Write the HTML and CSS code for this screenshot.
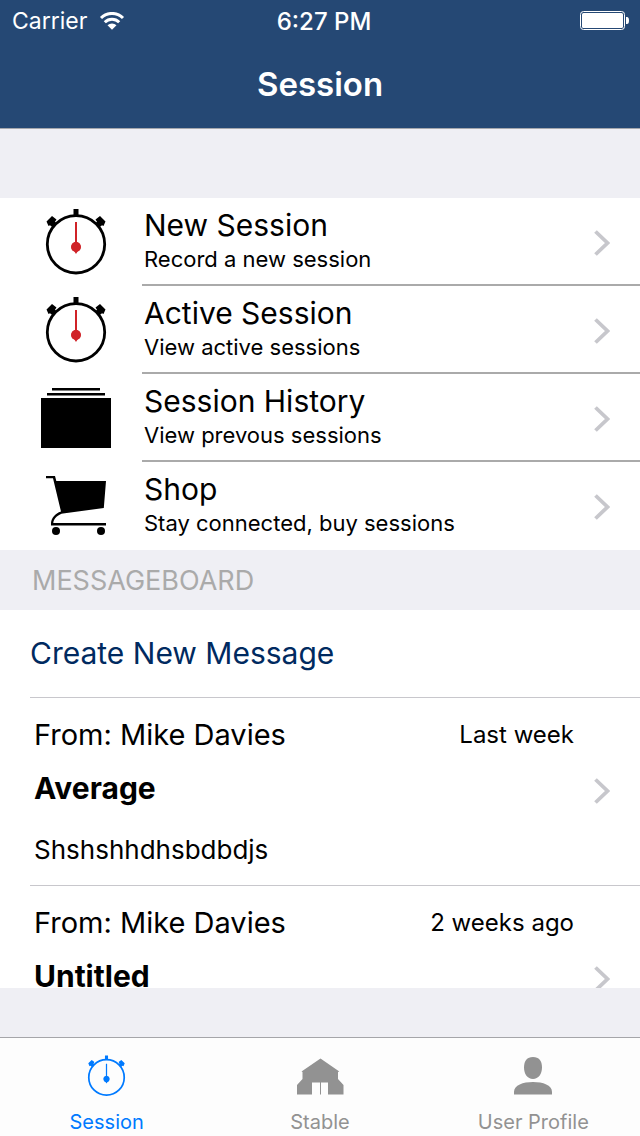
FILE: index.html
```html
<!DOCTYPE html>
<html lang="en">
<head>
<meta charset="utf-8">
<meta name="viewport" content="width=device-width, initial-scale=1">
<title>Session</title>
<link rel="stylesheet" href="styles.css">
</head>
<body>
<svg class="defs" aria-hidden="true">
  <symbol id="stopwatch" viewBox="0 0 72 68">
    <circle cx="36" cy="36.300" r="28.700" fill="none" stroke="currentColor" stroke-width="2.800"/>
    <path fill="currentColor" d="M33.500 1h5v7h-5zM6.500 13.500l5.500-5.500 4.500 3.500-1.500 2.300 1.500 1.500-4 4-2.500-2-1.500.8zM65.500 13.500l-5.500-5.500-4.500 3.500 1.500 2.300-1.500 1.500 4 4 2.500-2 1.500.8z"/>
    <path class="hand" d="M35 14h2v20a5 5 0 0 1 .8 9.200L36 46l-1.800-2.800A5 5 0 0 1 35 34z"/>
    <circle class="hand" cx="36" cy="39" r="5"/>
  </symbol>
  <symbol id="chevron" viewBox="0 0 16 26">
    <path d="M1.500 1.500 13.500 13 1.500 24.500" fill="none" stroke="currentColor" stroke-width="3.800"/>
  </symbol>
</svg>
<div class="app">
  <header class="top">
    <div class="status">
      <div class="carrier">
        <span>Carrier</span>
        <svg width="26" height="18" viewBox="0 0 26 18" aria-hidden="true">
          <path d="M2 6a15.500 15.500 0 0 1 22 0M5.800 10.200a10.200 10.200 0 0 1 14.400 0" fill="none" stroke="#fff" stroke-width="3"/>
          <path d="M8.500 13.200a6.500 6.500 0 0 1 9 0L13 17.700z" fill="#fff"/>
        </svg>
      </div>
      <time class="clock">6:27 PM</time>
      <svg class="battery" width="50" height="20" viewBox="0 0 50 20" aria-hidden="true">
        <rect x=".5" y=".5" width="44" height="18" rx="3" fill="none" stroke="#fff"/>
        <rect x="2" y="2" width="41" height="15" rx="1.500" fill="#fff"/>
        <path d="M46 6h1a2 3.500 0 0 1 0 7H46z" fill="#fff"/>
      </svg>
    </div>
    <h1 class="title">Session</h1>
  </header>

  <main class="content">
    <nav class="menu" aria-label="Sessions">
      <a class="menu-row" href="#new">
        <svg class="menu-icon" viewBox="0 0 72 68" aria-hidden="true"><use href="#stopwatch"/></svg>
        <span class="menu-body">
          <span class="menu-text"><span class="menu-title">New Session</span><span class="menu-sub">Record a new session</span></span>
          <svg class="chevron" aria-hidden="true"><use href="#chevron"/></svg>
        </span>
      </a>
      <a class="menu-row" href="#active">
        <svg class="menu-icon" viewBox="0 0 72 68" aria-hidden="true"><use href="#stopwatch"/></svg>
        <span class="menu-body">
          <span class="menu-text"><span class="menu-title">Active Session</span><span class="menu-sub">View active sessions</span></span>
          <svg class="chevron" aria-hidden="true"><use href="#chevron"/></svg>
        </span>
      </a>
      <a class="menu-row" href="#history">
        <svg class="menu-icon" viewBox="0 0 72 68" aria-hidden="true"><path d="M12 4h48v2.500H12zM7 9h58v2.500H7zM1 14h70v50H1z"/></svg>
        <span class="menu-body">
          <span class="menu-text"><span class="menu-title">Session History</span><span class="menu-sub">View prevous sessions</span></span>
          <svg class="chevron" aria-hidden="true"><use href="#chevron"/></svg>
        </span>
      </a>
      <a class="menu-row" href="#shop">
        <svg class="menu-icon" viewBox="0 0 72 68" aria-hidden="true">
          <path d="M6 4h9l1.300 5H66l-2.200 27L23 41.500l-1.500.3C16 44 13.500 48 13.300 51H66v2.500H11V51c.3-5 4-9.500 10-11.500L13 6.300H6z"/>
          <circle cx="16" cy="59" r="4"/><circle cx="61" cy="59" r="4"/>
        </svg>
        <span class="menu-body">
          <span class="menu-text"><span class="menu-title">Shop</span><span class="menu-sub">Stay connected, buy sessions</span></span>
          <svg class="chevron" aria-hidden="true"><use href="#chevron"/></svg>
        </span>
      </a>
    </nav>

    <h2 class="section">MESSAGEBOARD</h2>

    <section class="board" aria-label="Messageboard">
      <button class="create" type="button">Create New Message</button>
      <a class="message" href="#message-1">
        <span class="message-body">
          <span class="message-head"><span class="from">From: Mike Davies</span><time class="when">Last week</time></span>
          <strong class="subject">Average</strong>
          <span class="text">Shshshhdhsbdbdjs</span>
        </span>
        <svg class="chevron" aria-hidden="true"><use href="#chevron"/></svg>
      </a>
      <a class="message" href="#message-2">
        <span class="message-body">
          <span class="message-head"><span class="from">From: Mike Davies</span><time class="when">2 weeks ago</time></span>
          <strong class="subject">Untitled</strong>
        </span>
        <svg class="chevron" aria-hidden="true"><use href="#chevron"/></svg>
      </a>
    </section>
  </main>

  <nav class="tabs" aria-label="Main">
    <a class="tab active" href="#session" aria-current="page">
      <svg width="45" height="42" viewBox="0 0 72 68" aria-hidden="true"><use href="#stopwatch"/></svg>
      <span>Session</span>
    </a>
    <a class="tab" href="#stable">
      <svg width="48" height="42" viewBox="0 0 48 42" aria-hidden="true"><path fill="currentColor" d="M24.500 3.500 43.300 16.500l-1.300.5v7l5.500 6v9.500H32V27.500h-7V39.500h-1V27.500h-8V39.500H1V30l5.500-6v-7l-1-.5z"/></svg>
      <span>Stable</span>
    </a>
    <a class="tab" href="#profile">
      <svg width="40" height="42" viewBox="0 0 40 42" aria-hidden="true"><path fill="currentColor" d="M20 2c6 0 9 4 9 10.500S25.500 24 20 24s-9-5-9-11.500S14 2 20 2zM1 39.500V37c0-7 9-10 19-10s19 3 19 10v2.500z"/></svg>
      <span>User Profile</span>
    </a>
  </nav>
</div>
</body>
</html>
```
FILE: styles.css
```css
* {
  box-sizing: border-box;
}

body {
  margin: 0;
  background: #efeff4;
  color: #000;
  font-family: Inter, "Liberation Sans", sans-serif;
}

a {
  color: inherit;
  text-decoration: none;
}

.defs {
  position: absolute;
  width: 0;
  height: 0;
}

.app {
  display: flex;
  flex-direction: column;
  height: 100vh;
}

.top {
  flex: none;
  background: #254874;
  border-bottom: 1px solid #a5a7ad;
  color: #fff;
}

.status {
  display: grid;
  grid-template-columns: 1fr auto 1fr;
  align-items: center;
  height: 42px;
  padding: 0 10px 0 12px;
  font-size: 24px;
}

.carrier {
  display: flex;
  align-items: center;
  gap: 12px;
  font-size: 23px;
}

.clock {
  padding-left: 6px;
  font-weight: 500;
}

.battery {
  justify-self: end;
}

.title {
  margin: 0;
  padding: 20px 0 22px;
  font-size: 33px;
  font-weight: 600;
  line-height: 44px;
  text-align: center;
}

.content {
  display: flex;
  flex: 1;
  flex-direction: column;
  min-height: 0;
  padding: 69px 0 49px;
}

.menu {
  flex: none;
  background: #fff;
}

.menu-row {
  display: flex;
  gap: 30px;
  height: 88px;
  padding-left: 40px;
}

.menu-icon {
  flex: none;
  width: 72px;
  height: 68px;
  margin-top: 10px;
}

.hand {
  fill: var(--hand, #d02328);
}

.menu-body {
  display: flex;
  flex: 1;
  align-items: center;
  justify-content: space-between;
  padding: 4px 30px 0 2px;
  border-bottom: 2px solid #aaa;
}

.menu-row:last-child .menu-body {
  border-color: transparent;
}

.menu-text {
  display: flex;
  flex-direction: column;
  padding-bottom: 8px;
}

.menu-title {
  font-size: 30px;
  line-height: 40px;
}

.menu-sub {
  font-size: 22px;
  line-height: 28px;
}

.chevron {
  flex: none;
  width: 16px;
  height: 26px;
  color: #c7c7cc;
}

.section {
  flex: none;
  margin: 0;
  padding: 2px 32px 0;
  color: #aaa;
  font-size: 27px;
  font-weight: 400;
  line-height: 58px;
}

.board {
  flex: 1;
  min-height: 0;
  overflow: hidden;
  background: #fff;
}

.create {
  display: block;
  width: calc(100% - 30px);
  height: 88px;
  margin-left: 30px;
  padding: 0 0 2px;
  border: 0;
  border-bottom: 1px solid #c8c7cc;
  background: none;
  color: #002a60;
  font: inherit;
  font-size: 30px;
  text-align: left;
}

.message {
  display: flex;
  align-items: center;
  gap: 20px;
  height: 188px;
  margin-left: 30px;
  padding: 0 30px 2px 4px;
  border-bottom: 1px solid #c8c7cc;
}

.message-body {
  display: flex;
  flex: 1;
  flex-direction: column;
  height: 100%;
  padding-top: 17px;
}

.message-head {
  display: flex;
  align-items: center;
  justify-content: space-between;
  line-height: 40px;
}

.from {
  font-size: 29px;
}

.when {
  font-size: 24px;
}

.subject {
  margin-top: 13px;
  font-size: 30px;
  font-weight: 700;
  line-height: 40px;
}

.text {
  margin-top: 22px;
  font-size: 26px;
  line-height: 40px;
}

.tabs {
  display: grid;
  flex: none;
  grid-template-columns: repeat(3, 1fr);
  border-top: 1px solid #a5a5a9;
  background: #fdfdfd;
}

.tab {
  display: flex;
  flex-direction: column;
  align-items: center;
  gap: 12px;
  padding: 17px 0 0;
  color: #929292;
  font-size: 20px;
  line-height: 27px;
}

.tab.active {
  --hand: #007aff;
  color: #007aff;
}
```
